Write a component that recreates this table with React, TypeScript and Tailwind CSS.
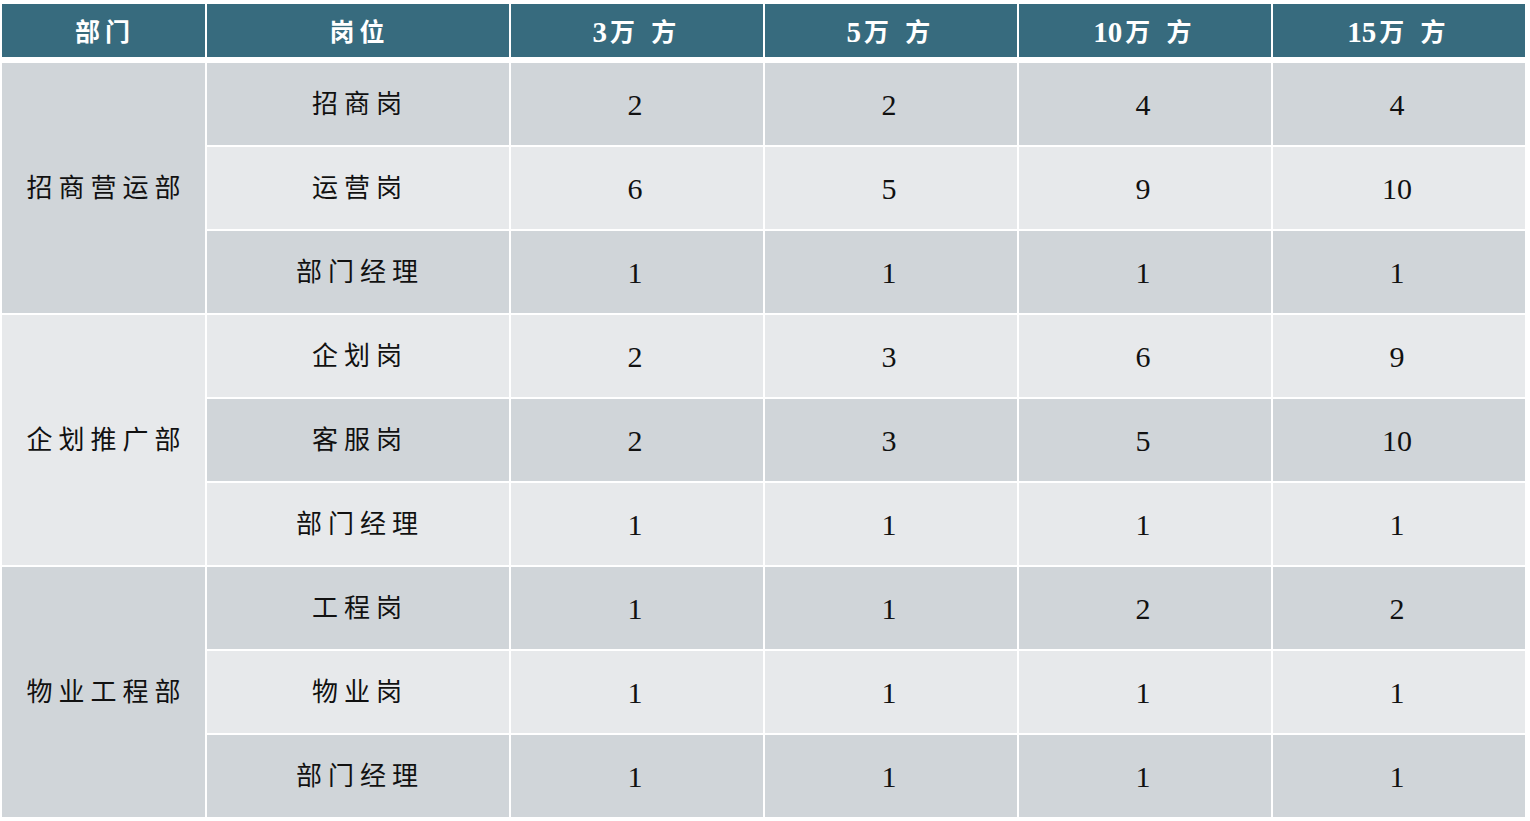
import React from 'react';

type Row = { post: string; v: [string, string, string, string] };
type Group = { dept: string; light: boolean; rows: Row[] };

const groups: Group[] = [
  {
    dept: '招商营运部',
    light: false,
    rows: [
      { post: '招商岗', v: ['2', '2', '4', '4'] },
      { post: '运营岗', v: ['6', '5', '9', '10'] },
      { post: '部门经理', v: ['1', '1', '1', '1'] },
    ],
  },
  {
    dept: '企划推广部',
    light: true,
    rows: [
      { post: '企划岗', v: ['2', '3', '6', '9'] },
      { post: '客服岗', v: ['2', '3', '5', '10'] },
      { post: '部门经理', v: ['1', '1', '1', '1'] },
    ],
  },
  {
    dept: '物业工程部',
    light: false,
    rows: [
      { post: '工程岗', v: ['1', '1', '2', '2'] },
      { post: '物业岗', v: ['1', '1', '1', '1'] },
      { post: '部门经理', v: ['1', '1', '1', '1'] },
    ],
  },
];

// [number part, chinese part]
const headers: [string, string][] = [
  ['', '部门'],
  ['', '岗位'],
  ['3', '万 方'],
  ['5', '万 方'],
  ['10', '万 方'],
  ['15', '万 方'],
];

const FONT = "font-['Liberation_Serif','Noto_Sans_CJK_SC',serif]";

export default function StaffingTable() {
  let rowIndex = 0;

  return (
    <div className={`min-h-screen bg-white pl-[2px] pt-[4px] ${FONT}`}>
      {/* Header */}
      <div className="grid grid-cols-[203px_302px_252px_252px_252px_252px] gap-x-[2px] mb-[6px]">
        {headers.map(([num, zh]) => (
          <div
            key={num + zh}
            className="h-[53px] pt-[5px] bg-[#376b7e] text-white font-bold flex items-center justify-center"
          >
            {num && <span className="text-[29px]">{num}</span>}
            <span className="text-[25px] tracking-[5px] pl-[3px]">{zh}</span>
          </div>
        ))}
      </div>

      {/* Body */}
      <div className="grid grid-cols-[203px_302px_252px_252px_252px_252px] grid-rows-[repeat(9,82px)] gap-x-[2px] gap-y-[2px] text-[#111]">
        {groups.map((g) => (
          <React.Fragment key={g.dept}>
            <div
              className={`row-span-3 col-start-1 flex items-center justify-center text-[26px] tracking-[6px] pl-[6px] ${
                g.light ? 'bg-[#e7e9eb]' : 'bg-[#d0d5d9]'
              }`}
            >
              {g.dept}
            </div>
            {g.rows.map((r) => {
              const light = rowIndex++ % 2 === 1;
              const bg = light ? 'bg-[#e7e9eb]' : 'bg-[#d0d5d9]';
              return (
                <React.Fragment key={g.dept + r.post}>
                  <div className={`${bg} flex items-center justify-center text-[26px] tracking-[6px] pl-[4px]`}>
                    {r.post}
                  </div>
                  {r.v.map((n, i) => (
                    <div key={i} className={`${bg} flex items-center justify-center pr-[4px] text-[30px]`}>
                      {n}
                    </div>
                  ))}
                </React.Fragment>
              );
            })}
          </React.Fragment>
        ))}
      </div>
    </div>
  );
}
